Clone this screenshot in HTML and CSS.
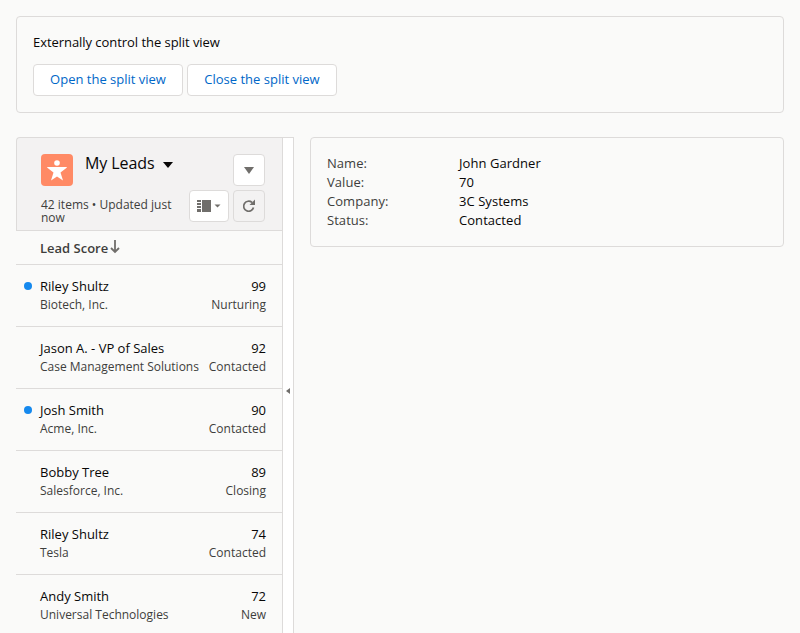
FILE: index.html
```html
<!DOCTYPE html>
<html>
  <head>
    <meta charset="UTF-8" />
    <title>Split view</title>
    <link rel="stylesheet" href="styles.css">
  </head>
  <body>
    <section class="card control">
      <p class="control-title">Externally control the split view</p>
      <div class="control-buttons">
        <button class="btn">Open the split view</button>
        <button class="btn">Close the split view</button>
      </div>
    </section>

    <div class="split">
      <aside class="list-panel">
        <header class="list-header">
          <div class="list-header-left">
            <div class="list-title-row">
              <span class="lead-icon">
                <svg width="24" height="24" viewBox="0 0 24 24">
                  <circle cx="12" cy="5" r="2.800" fill="#fff" />
                  <path d="M2 9.500 Q1.500 9 3 9 H21 Q22.500 9 22 9.500 L15.500 14.500 L18 22.500 L12 18.500 L6 22.500 L8.500 14.500 Z" fill="#fff" />
                </svg>
              </span>
              <h1 class="list-title">My Leads</h1>
              <span class="title-caret"></span>
            </div>
            <p class="list-meta">42 items • Updated just now</p>
          </div>
          <div class="list-actions">
            <button class="icon-btn"><span class="action-caret"></span></button>
            <div class="list-actions-row">
              <button class="icon-btn wide">
                <svg width="24" height="14" viewBox="0 0 24 14">
                  <path d="M0 1h4v2H0zM0 4h4v2H0zM0 7h4v2H0zM0 10h4v2H0zM5 1h9v12H5z M0 13h4v-1H0z" fill="#706e6b" />
                  <path d="M17.500 5.500h6l-3 3z" fill="#706e6b" />
                </svg>
              </button>
              <button class="icon-btn grey">
                <svg width="16" height="16" viewBox="0 0 16 16">
                  <path d="M12.500 9.500a5 5 0 1 1-1.500-5" fill="none" stroke="#706e6b" stroke-width="1.700" />
                  <path d="M14 1.500v5.500h-5.500z" fill="#706e6b" />
                </svg>
              </button>
            </div>
          </div>
        </header>
        <div class="sort-row">Lead Score
          <svg class="sort-arrow" width="10" height="15" viewBox="0 0 10 15">
            <path d="M5 1v12M1 9l4 4 4-4" fill="none" stroke="#706e6b" stroke-width="1.800" />
          </svg>
        </div>
        <ul class="lead-list">
          <li class="lead unread">
            <div class="lead-line"><span class="lead-name">Riley Shultz</span><span>99</span></div>
            <div class="lead-line sub"><span>Biotech, Inc.</span><span>Nurturing</span></div>
          </li>
          <li class="lead">
            <div class="lead-line"><span class="lead-name">Jason A. - VP of Sales</span><span>92</span></div>
            <div class="lead-line sub"><span>Case Management Solutions</span><span>Contacted</span></div>
          </li>
          <li class="lead unread">
            <div class="lead-line"><span class="lead-name">Josh Smith</span><span>90</span></div>
            <div class="lead-line sub"><span>Acme, Inc.</span><span>Contacted</span></div>
          </li>
          <li class="lead">
            <div class="lead-line"><span class="lead-name">Bobby Tree</span><span>89</span></div>
            <div class="lead-line sub"><span>Salesforce, Inc.</span><span>Closing</span></div>
          </li>
          <li class="lead">
            <div class="lead-line"><span class="lead-name">Riley Shultz</span><span>74</span></div>
            <div class="lead-line sub"><span>Tesla</span><span>Contacted</span></div>
          </li>
          <li class="lead">
            <div class="lead-line"><span class="lead-name">Andy Smith</span><span>72</span></div>
            <div class="lead-line sub"><span>Universal Technologies</span><span>New</span></div>
          </li>
        </ul>
      </aside>

      <div class="split-bar"><span class="bar-caret"></span></div>

      <section class="card detail">
        <dl class="detail-grid">
          <dt>Name:</dt><dd>John Gardner</dd>
          <dt>Value:</dt><dd>70</dd>
          <dt>Company:</dt><dd>3C Systems</dd>
          <dt>Status:</dt><dd>Contacted</dd>
        </dl>
      </section>
    </div>
  </body>
</html>
```

FILE: styles.css
```css
html,
body {
  height: 100%;
}

body {
  box-sizing: border-box;
  margin: 0;
  padding: 16px 16px 0;
  overflow: hidden;
  background-color: #fafaf9;
  color: #080707;
  font-family: "Open Sans", "Noto Sans", sans-serif;
  font-size: 13px;
  line-height: 19px;
  letter-spacing: 0;
}

p,
h1,
ul,
dl,
dd {
  margin: 0;
  padding: 0;
}

.card {
  box-sizing: border-box;
  border: 1px solid #dddbda;
  border-radius: 4px;
}

.control {
  height: 97px;
  padding: 16px;
}

.control-title {
  letter-spacing: -0.05px;
}

.control-buttons {
  display: flex;
  gap: 4px;
  margin-top: 12px;
}

.btn {
  width: 150px;
  height: 32px;
  padding: 0 0 2px;
  border: 1px solid #dddbda;
  border-radius: 4px;
  background-color: #fff;
  color: #0067c8;
  font: inherit;
  letter-spacing: inherit;
}

.split {
  display: flex;
  align-items: flex-start;
  height: 496px;
  margin-top: 24px;
  overflow: hidden;
}

.list-panel {
  box-sizing: border-box;
  flex: none;
  width: 267px;
  height: 100%;
  border-right: 1px solid #dddbda;
}

.list-header {
  box-sizing: border-box;
  display: flex;
  justify-content: space-between;
  height: 94px;
  padding: 16px 17px 0 24px;
  border: 1px solid #dddbda;
  border-right: 0;
  border-radius: 4px 0 0 0;
  background-color: #f3f2f2;
}

.list-header-left {
  width: 140px;
}

.list-title-row {
  display: flex;
  align-items: flex-start;
}

.lead-icon {
  display: flex;
  align-items: center;
  justify-content: center;
  flex: none;
  width: 32px;
  height: 32px;
  border-radius: 4px;
  background-color: #ff8a65;
}

.list-title {
  margin-left: 12px;
  margin-top: -1px;
  font-size: 16px;
  font-weight: 400;
  line-height: 20px;
  letter-spacing: -0.1px;
  white-space: nowrap;
}

.title-caret {
  flex: none;
  width: 0;
  height: 0;
  margin: 8px 0 0 9px;
  border-left: 5.500px solid transparent;
  border-right: 5.500px solid transparent;
  border-top: 6px solid #080707;
}

.list-meta {
  margin-top: 12px;
  color: #3e3e3c;
  font-size: 12px;
  line-height: 13px;
}

.list-actions {
  display: flex;
  flex-direction: column;
  align-items: flex-end;
  gap: 4px;
}

.list-actions-row {
  display: flex;
  gap: 4px;
}

.icon-btn {
  display: flex;
  align-items: center;
  justify-content: center;
  width: 32px;
  height: 32px;
  padding: 0;
  border: 1px solid #dddbda;
  border-radius: 4px;
  background-color: #fff;
}

.icon-btn.wide {
  width: 40px;
}

.icon-btn.grey {
  background-color: #f3f2f2;
}

.action-caret {
  width: 0;
  height: 0;
  border-left: 5.500px solid transparent;
  border-right: 5.500px solid transparent;
  border-top: 7px solid #706e6b;
}

.sort-row {
  box-sizing: border-box;
  display: flex;
  align-items: center;
  gap: 2px;
  height: 34px;
  padding: 2px 0 0 24px;
  border-bottom: 1px solid #dddbda;
  color: #3e3e3c;
  font-weight: 600;
}

.sort-arrow {
  margin-top: -5px;
}

.lead-list {
  list-style: none;
}

.lead {
  position: relative;
  box-sizing: border-box;
  height: 62px;
  padding: 12px 16px 0 24px;
  border-bottom: 1px solid #dddbda;
}

.lead.unread::before {
  content: "";
  position: absolute;
  top: 17px;
  left: 8px;
  width: 8px;
  height: 8px;
  border-radius: 50%;
  background-color: #1589ee;
}

.lead-line {
  display: flex;
  justify-content: space-between;
  white-space: nowrap;
}

.lead-line.sub {
  margin-top: -1px;
  color: #3e3e3c;
  font-size: 12px;
}

.split-bar {
  position: relative;
  flex: none;
  box-sizing: border-box;
  width: 11px;
  height: 100%;
  margin-right: 16px;
  border-top: 1px solid #dddbda;
  border-right: 1px solid #dddbda;
  background-color: #fff;
}

.bar-caret {
  position: absolute;
  top: 250px;
  left: 3px;
  width: 0;
  height: 0;
  border-top: 3.500px solid transparent;
  border-bottom: 3.500px solid transparent;
  border-right: 4px solid #706e6b;
}

.detail {
  flex: 1;
  height: 110px;
  padding: 16px;
}

.detail-grid {
  display: grid;
  grid-template-columns: 132px 1fr;
  letter-spacing: 0.05px;
}

.detail-grid dt {
  color: #3e3e3c;
}
```
